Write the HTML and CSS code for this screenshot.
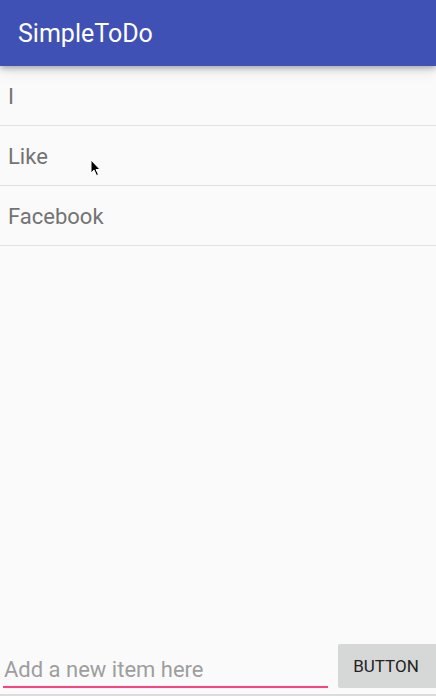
FILE: index.html
```html
<!DOCTYPE html>
<html>
<head>
<meta charset="utf-8">
<link rel="stylesheet" href="styles.css">
</head>
<body>
<div class="screen">
  <header class="appbar"><span class="title">SimpleToDo</span></header>
  <ul class="list">
    <li class="item">I</li>
    <li class="item">Like</li>
    <li class="item">Facebook</li>
  </ul>
  <div class="spacer"></div>
  <div class="composer">
    <div class="field"><span class="hint">Add a new item here</span></div>
    <div class="btn">BUTTON</div>
  </div>
  <div class="bottomline"></div>
  <svg class="cursor" width="12" height="18" viewBox="0 0 12 18"><path d="M1 1 L1 14 L4 11 L6.5 16.5 L8.5 15.5 L6 10.5 L10 10.5 Z" fill="#000" stroke="#fff" stroke-width="1"/></svg>
</div>
</body>
</html>
```
FILE: styles.css
```css
* { box-sizing: border-box; }
html, body { margin: 0; padding: 0; }
body { background: #fafafa; font-family: Roboto, "Noto Sans", sans-serif; }
.screen { position: relative; width: 436px; height: 696px; display: flex; flex-direction: column; overflow: hidden; background: #fafafa; }
.appbar { height: 66px; background: #3f51b5; display: flex; align-items: center; padding-left: 18px; box-shadow: 0 2px 6px rgba(0,0,0,0.3), 0 6px 12px rgba(0,0,0,0.08); position: relative; z-index: 1; flex: none; }
.title { color: #fff; font-size: 25px; }
.list { list-style: none; margin: 0; padding: 0; flex: none; }
.item { height: 60px; border-bottom: 1px solid #e0e0e0; display: flex; align-items: center; padding-left: 8px; padding-top: 2px; font-size: 22px; color: #737373; }
.spacer { flex: 1; }
.composer { display: flex; align-items: flex-end; height: 52px; flex: none; }
.field { flex: none; width: 325px; margin-left: 3px; margin-bottom: 8px; border-bottom: 2px solid #ff4081; height: 36px; display: flex; align-items: flex-end; padding-bottom: 4px; }
.hint { font-size: 22px; color: #9e9e9e; margin-left: 1px; }
.btn { flex: none; margin-left: 10px; width: 104px; height: 44px; margin-bottom: 8px; background: #d6d7d7; border-radius: 2px; display: flex; align-items: center; justify-content: center; font-size: 17px; color: #222; padding-right: 8px; }
.bottomline { height: 2px; background: #dcdcdc; flex: none; margin-top: -2px; }
.cursor { position: absolute; left: 90px; top: 159px; }
```
